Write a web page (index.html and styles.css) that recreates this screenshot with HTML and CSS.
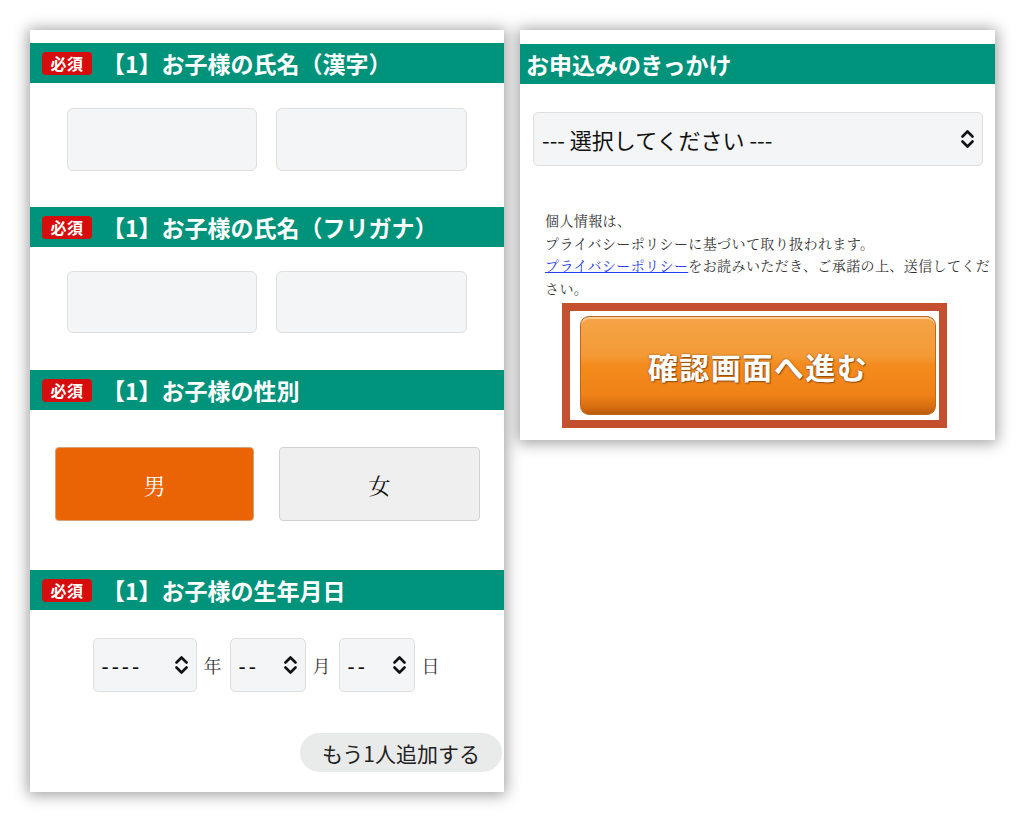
FILE: index.html
```html
<!DOCTYPE html>
<html lang="ja">

<head>
  <meta charset="UTF-8">
  <meta name="viewport" content="width=device-width, initial-scale=1.0">
  <title>お申込みフォーム</title>
  <link rel="stylesheet" href="styles.css">
</head>

<body>
  <div class="page">
    <!-- left: child info -->
    <div class="panel panel-left">
      <div class="heading">
        <span class="badge">必須</span>
        <span class="heading-text">【1】お子様の氏名（漢字）</span>
      </div>
      <div class="field name-row">
        <div class="input"></div>
        <div class="input"></div>
      </div>

      <div class="heading">
        <span class="badge">必須</span>
        <span class="heading-text">【1】お子様の氏名（フリガナ）</span>
      </div>
      <div class="field name-row kana">
        <div class="input"></div>
        <div class="input"></div>
      </div>

      <div class="heading">
        <span class="badge">必須</span>
        <span class="heading-text">【1】お子様の性別</span>
      </div>
      <div class="field gender-row">
        <div class="gender active">男</div>
        <div class="gender">女</div>
      </div>

      <div class="heading">
        <span class="badge">必須</span>
        <span class="heading-text">【1】お子様の生年月日</span>
      </div>
      <div class="field date-field">
        <div class="date-row">
          <div class="select select-year">
            <span class="dash">----</span>
            <svg class="chev" width="13" height="20" viewBox="0 0 13 20"><path d="M1.5 7.5 L6.5 2.5 L11.5 7.5 M1.5 12.5 L6.5 17.5 L11.5 12.5" /></svg>
          </div>
          <span class="unit">年</span>
          <div class="select select-small">
            <span class="dash">--</span>
            <svg class="chev" width="13" height="20" viewBox="0 0 13 20"><path d="M1.5 7.5 L6.5 2.5 L11.5 7.5 M1.5 12.5 L6.5 17.5 L11.5 12.5" /></svg>
          </div>
          <span class="unit">月</span>
          <div class="select select-small">
            <span class="dash">--</span>
            <svg class="chev" width="13" height="20" viewBox="0 0 13 20"><path d="M1.5 7.5 L6.5 2.5 L11.5 7.5 M1.5 12.5 L6.5 17.5 L11.5 12.5" /></svg>
          </div>
          <span class="unit">日</span>
        </div>
        <div class="add-row">
          <span class="add-btn">もう1人追加する</span>
        </div>
      </div>
    </div>

    <!-- right: trigger + submit -->
    <div class="panel panel-right">
      <div class="heading heading-plain">
        <span class="heading-text">お申込みのきっかけ</span>
      </div>
      <div class="select select-wide">
        <span>--- 選択してください ---</span>
        <svg class="chev" width="13" height="20" viewBox="0 0 13 20"><path d="M1.5 7.5 L6.5 2.5 L11.5 7.5 M1.5 12.5 L6.5 17.5 L11.5 12.5" /></svg>
      </div>
      <p class="notice">
        個人情報は、<br>
        プライバシーポリシーに基づいて取り扱われます。<br>
        <a href="#">プライバシーポリシー</a>をお読みいただき、ご承諾の上、送信してください。
      </p>
      <div class="submit-frame">
        <div class="submit-btn">確認画面へ進む</div>
      </div>
    </div>
  </div>
</body>

</html>
```

FILE: styles.css
```css
:root {
  --green: #00937b;
  --badge-red: #d60d0d;
  --orange: #ea6406;
  --field-bg: #f3f5f6;
  --field-border: #dedede;
  --sans: "Noto Sans CJK JP", "Noto Sans", sans-serif;
  --serif: "Noto Serif CJK JP", "Noto Sans CJK JP", serif;
}

body {
  margin: 0;
  background: #fff;
  font-family: var(--sans);
  color: #222;
}

.page {
  display: flex;
  align-items: flex-start;
  gap: 16px;
  padding: 30px 0 30px 30px;
}

.panel {
  background: #fff;
  box-shadow: 0 1px 14px 2px rgba(0, 0, 0, 0.38);
  overflow: hidden;
}

.panel-left {
  width: 474px;
  padding-top: 13px;
}

.panel-right {
  width: 475px;
  padding-top: 14px;
  padding-bottom: 12px;
}

/* section headings */
.heading {
  height: 40px;
  background: var(--green);
  display: flex;
  align-items: center;
  padding-left: 12px;
}

.heading-plain {
  padding-left: 6px;
}

.badge {
  width: 50px;
  height: 23px;
  box-sizing: border-box;
  background: var(--badge-red);
  border-radius: 4px;
  color: #fff;
  font-size: 16px;
  font-weight: 700;
  line-height: 23px;
  text-align: center;
  margin-right: 10px;
  letter-spacing: 0.5px;
}

.heading-text {
  color: #fff;
  font-size: 23px;
  font-weight: 700;
  line-height: 1;
}

/* name inputs */
.name-row {
  display: grid;
  grid-template-columns: 190px 191px;
  gap: 19px;
  padding: 25px 37px 36px;
}

.name-row .input {
  height: 63px;
}

.name-row.kana {
  padding: 24px 37px 37px;
}

.name-row.kana .input {
  height: 62px;
}

.input {
  box-sizing: border-box;
  background: var(--field-bg);
  border: 1px solid var(--field-border);
  border-radius: 6px;
}

/* gender */
.gender-row {
  display: grid;
  grid-template-columns: 199px 201px;
  gap: 25px;
  padding: 37px 24px 49px 25px;
}

.gender {
  height: 74px;
  box-sizing: border-box;
  display: flex;
  align-items: center;
  justify-content: center;
  border-radius: 4px;
  border: 1px solid #d2d2d2;
  background: #efefef;
  font-family: var(--serif);
  font-size: 22px;
  color: #111;
}

.gender.active {
  background: var(--orange);
  border-color: #d9a27a;
  color: #fff;
}

/* selects */
.select {
  box-sizing: border-box;
  height: 54px;
  display: flex;
  align-items: center;
  justify-content: space-between;
  padding: 0 8px;
  background: var(--field-bg);
  border: 1px solid var(--field-border);
  border-radius: 5px;
  font-size: 21px;
  color: #111;
}

.chev {
  flex: none;
}

.chev path {
  fill: none;
  stroke: #111;
  stroke-width: 2.6;
  stroke-linecap: round;
  stroke-linejoin: round;
}

.date-field {
  padding: 28px 2px 20px 0;
}

.date-row {
  display: flex;
  align-items: center;
  justify-content: center;
  padding-left: 8px;
}

.select-year {
  width: 104px;
}

.select-small {
  width: 76px;
}

.dash {
  letter-spacing: 3px;
  font-size: 20px;
  font-weight: 500;
}

.unit {
  font-family: var(--serif);
  font-size: 18px;
  color: #333;
  margin: 0 8px 0 7px;
}

.add-row {
  display: flex;
  justify-content: flex-end;
  margin-top: 41px;
}

.add-btn {
  height: 39px;
  display: flex;
  align-items: center;
  padding: 0 22px;
  border-radius: 20px;
  background: #e9eaea;
  font-size: 21px;
  color: #222;
}

/* right panel */
.select-wide {
  margin: 28px 12px 0 13px;
  font-size: 22px;
}

.notice {
  margin: 43px 0 0 25px;
  font-family: var(--serif);
  font-size: 14px;
  letter-spacing: 0.4px;
  line-height: 22.5px;
  color: #333;
}

.notice a {
  color: #2a3cf0;
  text-decoration: underline;
}

.submit-frame {
  width: 385px;
  box-sizing: border-box;
  margin: 4px 0 0 42px;
  border: 8px solid #c5502f;
  padding: 5px 3px 5px 10px;
  background: #fff;
}

.submit-btn {
  height: 99px;
  box-sizing: border-box;
  display: flex;
  align-items: center;
  justify-content: center;
  border: 1px solid #c1661a;
  border-radius: 9px;
  background: linear-gradient(to bottom,
      #f5a448 0%,
      #f39a36 40%,
      #f48a1c 50%,
      #f08218 80%,
      #d36a0e 94%,
      #b85a0c 100%);
  box-shadow: inset 0 2px 0 rgba(255, 255, 255, 0.45);
  color: #fff;
  font-size: 30px;
  font-weight: 700;
  letter-spacing: 1.5px;
  text-shadow: 0 0 2px #8c4a14, 1px 1px 1px rgba(90, 40, 0, 0.6);
}
```
